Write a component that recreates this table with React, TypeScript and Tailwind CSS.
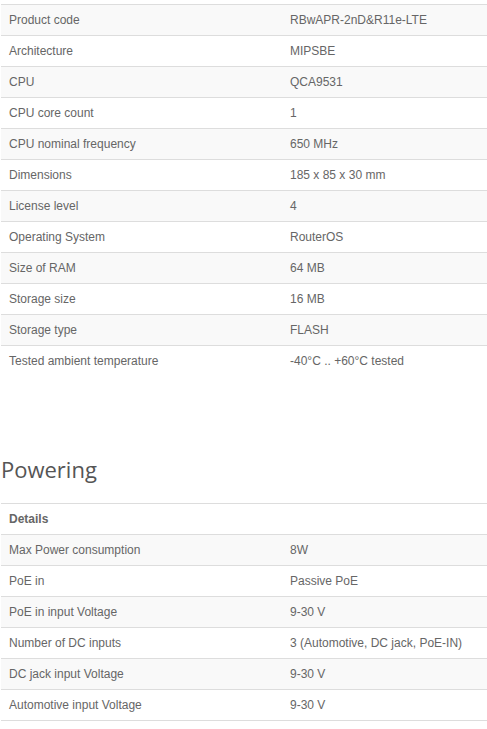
import React from "react";

type Spec = [string, string];

const general: Spec[] = [
  ["Product code", "RBwAPR-2nD&R11e-LTE"],
  ["Architecture", "MIPSBE"],
  ["CPU", "QCA9531"],
  ["CPU core count", "1"],
  ["CPU nominal frequency", "650 MHz"],
  ["Dimensions", "185 x 85 x 30 mm"],
  ["License level", "4"],
  ["Operating System", "RouterOS"],
  ["Size of RAM", "64 MB"],
  ["Storage size", "16 MB"],
  ["Storage type", "FLASH"],
  ["Tested ambient temperature", "-40°C .. +60°C tested"],
];

const powering: Spec[] = [
  ["Max Power consumption", "8W"],
  ["PoE in", "Passive PoE"],
  ["PoE in input Voltage", "9-30 V"],
  ["Number of DC inputs", "3 (Automotive, DC jack, PoE-IN)"],
  ["DC jack input Voltage", "9-30 V"],
  ["Automotive input Voltage", "9-30 V"],
];

const SpecRow = ({ spec, striped }: { spec: Spec; striped: boolean }) => {
  return (
    <div
      className={`flex h-[31px] items-center border-t border-[#dddddd] ${
        striped ? "bg-[#f9f9f9]" : "bg-white"
      }`}
    >
      <div className="w-[281px] pl-2">{spec[0]}</div>
      <div className="flex-1 pl-2">{spec[1]}</div>
    </div>
  );
};

export default function App() {
  return (
    <div
      className="min-h-[729px] bg-white pl-[1px] text-[12px] text-[#666666]"
      style={{ fontFamily: '"Liberation Sans", Arial, sans-serif' }}
    >
      <div className="pt-[4px]">
        {general.map((spec, i) => (
          <SpecRow key={spec[0]} spec={spec} striped={i % 2 === 0} />
        ))}
      </div>

      <h2
        className="mt-[78px] mb-[19px] text-[22px] leading-[30px] text-[#555555]"
        style={{ fontFamily: '"Open Sans", sans-serif' }}
      >
        Powering
      </h2>

      <div className="border-b border-[#dddddd]">
        <div className="flex h-[31px] items-center border-t border-[#dddddd] pl-2 font-bold">
          Details
        </div>
        {powering.map((spec, i) => (
          <SpecRow key={spec[0]} spec={spec} striped={i % 2 === 0} />
        ))}
      </div>
    </div>
  );
}
